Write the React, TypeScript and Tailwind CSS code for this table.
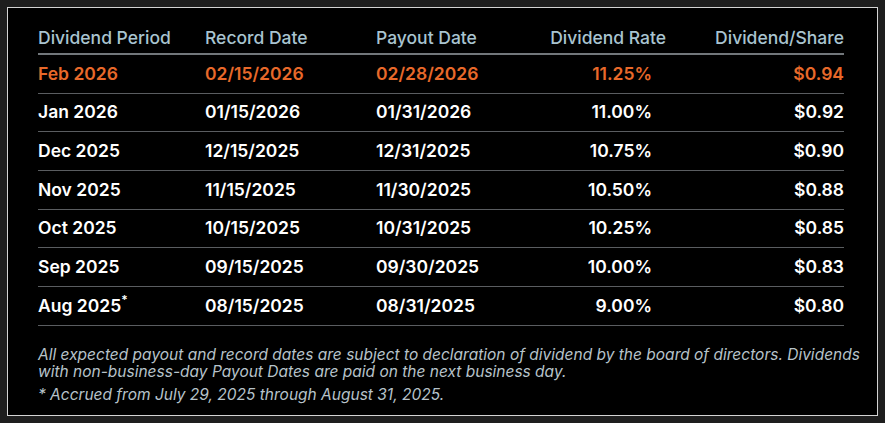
import React from 'react';

type Row = { period: string; record: string; payout: string; rate: string; share: string; star?: boolean };

const rows: Row[] = [
  { period: 'Feb 2026', record: '02/15/2026', payout: '02/28/2026', rate: '11.25%', share: '$0.94' },
  { period: 'Jan 2026', record: '01/15/2026', payout: '01/31/2026', rate: '11.00%', share: '$0.92' },
  { period: 'Dec 2025', record: '12/15/2025', payout: '12/31/2025', rate: '10.75%', share: '$0.90' },
  { period: 'Nov 2025', record: '11/15/2025', payout: '11/30/2025', rate: '10.50%', share: '$0.88' },
  { period: 'Oct 2025', record: '10/15/2025', payout: '10/31/2025', rate: '10.25%', share: '$0.85' },
  { period: 'Sep 2025', record: '09/15/2025', payout: '09/30/2025', rate: '10.00%', share: '$0.83' },
  { period: 'Aug 2025', record: '08/15/2025', payout: '08/31/2025', rate: '9.00%', share: '$0.80', star: true },
];

const cols = 'grid grid-cols-[167px_171px_128px_162px_1fr] items-center';

export default function App() {
  return (
    <div className="min-h-[423px] bg-[#1e1e1e] p-[7px] font-['Inter',sans-serif]">
      <div className="border border-[#d4d4d4] bg-black pl-[30px] pr-[33px] pt-[15px] pb-[12px]">
        {/* header */}
        <div className={`${cols} h-[32px] border-b-2 border-[#72777b] text-[17.5px] font-medium text-[#a9c4d0]`}>
          <div>Dividend Period</div>
          <div>Record Date</div>
          <div>Payout Date</div>
          <div className="text-right">Dividend Rate</div>
          <div className="text-right">Dividend/Share</div>
        </div>

        {rows.map((r, i) => (
          <div
            key={r.period}
            className={`${cols} h-[38.7px] border-b border-[#5a5d60] text-[17.5px] font-semibold ${i === 0 ? 'text-[#e8692a]' : 'text-white'}`}
          >
            <div>
              {r.period}
              {r.star && <sup className="relative -top-[8px] text-[12px]">*</sup>}
            </div>
            <div>{r.record}</div>
            <div>{r.payout}</div>
            <div className="text-right pr-[14px]">{r.rate}</div>
            <div className="text-right">{r.share}</div>
          </div>
        ))}

        <div className="mt-[20px] whitespace-nowrap text-[15.5px] italic leading-[17px] text-[#b7c3ca]">
          <p className="leading-[17.5px]">
            All expected payout and record dates are subject to declaration of dividend by the board of directors. Dividends
            <br />
            with non-business-day Payout Dates are paid on the next business day.
          </p>
          <p className="mt-[5px]">* Accrued from July 29, 2025 through August 31, 2025.</p>
        </div>
      </div>
    </div>
  );
}
